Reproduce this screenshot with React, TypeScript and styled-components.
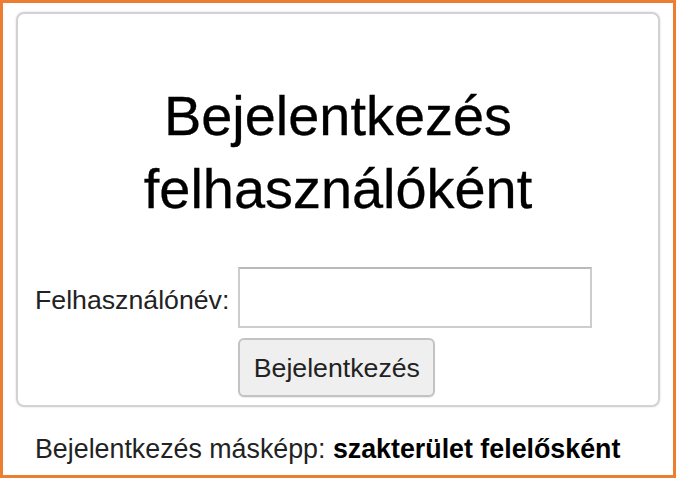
import React from "react";
import styled, { createGlobalStyle } from "styled-components";

const GlobalStyle = createGlobalStyle`
  html, body {
    margin: 0;
    padding: 0;
    background: #ffffff;
  }
  body {
    font-family: "Liberation Sans", Arial, sans-serif;
    color: #000;
  }
`;

const Frame = styled.div`
  width: 676px;
  height: 478px;
  box-sizing: border-box;
  border: 3px solid #ed7d31;
  padding: 9px 13px 0 13px;
  display: flex;
  flex-direction: column;
  background: #fff;
`;

const Card = styled.div`
  border: 2px solid #d2d2d2;
  border-radius: 8px;
  box-shadow: 0 0 2px rgba(0, 0, 0, 0.18);
  padding: 0 0 8px 0;
`;

const Title = styled.h1`
  margin: 65px 0 42px 0;
  text-align: center;
  font-size: 55.9px;
  line-height: 73px;
  font-weight: normal;
  color: #000;
  -webkit-text-stroke: 0.3px #000;
`;

const Form = styled.div`
  display: grid;
  grid-template-columns: auto 354px;
  column-gap: 9px;
  row-gap: 10px;
  margin-left: 17px;
  justify-content: start;
`;

const Label = styled.label`
  font-size: 26.7px;
  color: #222;
  align-self: center;
  padding-top: 5px;
`;

const TextInput = styled.input`
  width: 354px;
  height: 61px;
  box-sizing: border-box;
  border: 2px solid #cdcdcd;
  border-top-color: #b9b9b9;
  background: #fff;
  font-size: 26px;
  font-family: inherit;
  padding: 0 8px;
  outline: none;
`;

const Button = styled.button<{ $col?: number }>`
  grid-column: ${(p) => p.$col ?? 2};
  justify-self: start;
  width: 197px;
  height: 59px;
  box-sizing: border-box;
  border: 2px solid #c3c3c3;
  border-radius: 6px;
  background: #efefef;
  box-shadow: 0 1px 1px rgba(0, 0, 0, 0.08);
  font-family: inherit;
  font-size: 26.7px;
  color: #222;
  padding: 2px 0 0 0;
  cursor: pointer;
`;

const Footer = styled.p`
  margin: 27px 0 0 19px;
  font-size: 26.8px;
  line-height: 31px;
  color: #222;
`;

const Strong = styled.b`
  font-weight: bold;
  color: #000;
`;

export default function App() {
  return (
    <>
      <GlobalStyle />
      <Frame>
        <Card>
          <Title>
            Bejelentkezés
            <br />
            felhasználóként
          </Title>
          <Form>
            <Label htmlFor="username">Felhasználónév:</Label>
            <TextInput id="username" type="text" />
            <Button $col={2}>Bejelentkezés</Button>
          </Form>
        </Card>
        <Footer>
          Bejelentkezés másképp: <Strong>szakterület felelősként</Strong>
        </Footer>
      </Frame>
    </>
  );
}
